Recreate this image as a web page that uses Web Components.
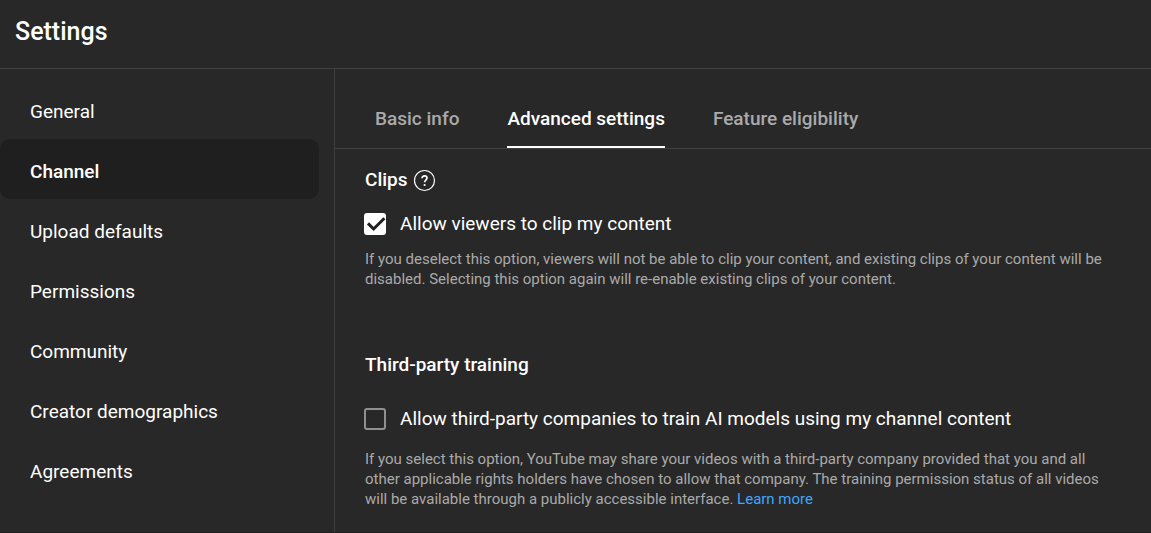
<!DOCTYPE html>
<html lang="en">
<head>
<meta charset="utf-8">
<meta name="viewport" content="width=device-width, initial-scale=1">
<title>Settings</title>
<style>
    body {
        margin: 0;
        background: #282828;
        color: #fff;
        font-family: Roboto, "Liberation Sans", sans-serif;
        font-size: 19px;
        line-height: 24px;
        --line: #3f3f3f;
        --muted: #aaa;
    }
</style>
</head>
<body>
<settings-dialog heading="Settings">
    <settings-nav-item slot="nav">General</settings-nav-item>
    <settings-nav-item slot="nav" selected>Channel</settings-nav-item>
    <settings-nav-item slot="nav">Upload defaults</settings-nav-item>
    <settings-nav-item slot="nav">Permissions</settings-nav-item>
    <settings-nav-item slot="nav">Community</settings-nav-item>
    <settings-nav-item slot="nav">Creator demographics</settings-nav-item>
    <settings-nav-item slot="nav">Agreements</settings-nav-item>

    <settings-tab slot="tabs">Basic info</settings-tab>
    <settings-tab slot="tabs" selected>Advanced settings</settings-tab>
    <settings-tab slot="tabs">Feature eligibility</settings-tab>

    <settings-section heading="Clips">
        <help-button slot="help"></help-button>
        <settings-option checked>
            Allow viewers to clip my content
            <span slot="description">If you deselect this option, viewers will not be able to clip your content, and existing clips of your content will be disabled. Selecting this option again will re-enable existing clips of your content.</span>
        </settings-option>
    </settings-section>
    <settings-section heading="Third-party training" spaced>
        <settings-option spaced>
            Allow third-party companies to train AI models using my channel content
            <span slot="description">If you select this option, YouTube may share your videos with a third-party company provided that you and all other applicable rights holders have chosen to allow that company. The training permission status of all videos will be available through a publicly accessible interface.</span>
            <settings-link slot="link">Learn more</settings-link>
        </settings-option>
    </settings-section>
</settings-dialog>

<script>
class SettingsElement extends HTMLElement {
    constructor() {
        super()
        this.attachShadow({mode: 'open'})
    }
    connectedCallback() {
        this.shadowRoot.innerHTML = this.template()
    }
    get(attr) {
        return this.getAttribute(attr) || ''
    }
}

class SettingsDialog extends SettingsElement {
    template() {
        return `
        <style>
            :host {
                display: flex;
                flex-direction: column;
                box-sizing: border-box;
                min-height: 100vh;
                border-bottom: 1px solid #1f1f1f;
            }
            header {
                padding: 16px 15px 20px;
                border-bottom: 1px solid var(--line);
            }
            h1 {
                margin: 0;
                font-size: 25px;
                font-weight: 500;
                line-height: 32px;
            }
            .body {
                display: flex;
                flex: 1;
            }
            nav {
                flex: none;
                width: 319px;
                padding: 10px 15px 0 0;
                border-right: 1px solid var(--line);
            }
            main {
                flex: 1;
                min-width: 0;
            }
            .tabs {
                display: flex;
                gap: 48px;
                padding: 20px 40px 0;
                border-bottom: 1px solid var(--line);
            }
            .content {
                padding: 16px 28px 16px 30px;
            }
        </style>
        <header><h1>${this.get('heading')}</h1></header>
        <div class="body">
            <nav><slot name="nav"></slot></nav>
            <main>
                <div class="tabs" role="tablist"><slot name="tabs"></slot></div>
                <div class="content"><slot></slot></div>
            </main>
        </div>
        `
    }
}
customElements.define('settings-dialog', SettingsDialog)

class SettingsNavItem extends SettingsElement {
    template() {
        return `
        <style>
            :host {
                display: block;
            }
            a {
                display: block;
                padding: 21px 30px 15px;
                border-radius: 10px;
                color: inherit;
                text-decoration: none;
            }
            :host([selected]) a {
                background: #1f1f1f;
                font-weight: 500;
            }
        </style>
        <a href="#" ${this.hasAttribute('selected') ? 'aria-current="page"' : ''}><slot></slot></a>
        `
    }
}
customElements.define('settings-nav-item', SettingsNavItem)

class SettingsTab extends SettingsElement {
    template() {
        return `
        <style>
            :host {
                display: block;
            }
            button {
                padding: 18px 0 15px;
                border: 0;
                border-bottom: 2px solid transparent;
                background: none;
                color: var(--muted);
                font: inherit;
                font-weight: 500;
                cursor: pointer;
            }
            :host([selected]) button {
                border-color: #fff;
                color: #fff;
            }
        </style>
        <button type="button" role="tab" aria-selected="${this.hasAttribute('selected')}"><slot></slot></button>
        `
    }
}
customElements.define('settings-tab', SettingsTab)

class SettingsSection extends SettingsElement {
    template() {
        return `
        <style>
            :host {
                display: block;
            }
            :host([spaced]) {
                margin-top: 61px;
            }
            .heading {
                display: flex;
                align-items: center;
                gap: 5px;
            }
            h2 {
                margin: 0;
                font-size: 19px;
                font-weight: 500;
                line-height: 30px;
            }
        </style>
        <div class="heading"><h2>${this.get('heading')}</h2><slot name="help"></slot></div>
        <slot></slot>
        `
    }
}
customElements.define('settings-section', SettingsSection)

class HelpButton extends SettingsElement {
    template() {
        return `
        <style>
            :host {
                display: block;
            }
            button {
                display: block;
                padding: 0;
                border: 0;
                background: none;
                color: inherit;
                cursor: pointer;
            }
            svg {
                display: block;
            }
        </style>
        <button type="button" aria-label="Help">
            <svg width="23" height="23" viewBox="0 0 23 23" fill="none" stroke="currentColor">
                <circle cx="11.5" cy="11.5" r="10" stroke-width="1.2"/>
                <path d="M9 9.3c0-1.5 1.1-2.5 2.5-2.5s2.5 1 2.5 2.3c0 1.9-2.4 2.1-2.4 4.2" stroke-width="1.7"/>
                <circle cx="11.6" cy="16" r="1.1" fill="currentColor" stroke="none"/>
            </svg>
        </button>
        `
    }
}
customElements.define('help-button', HelpButton)

class SettingsOption extends SettingsElement {
    template() {
        return `
        <style>
            :host {
                display: block;
                margin-top: 17px;
            }
            :host([spaced]) {
                margin-top: 27px;
            }
            label {
                display: flex;
                align-items: center;
                gap: 14px;
                margin-left: -1px;
            }
            .box {
                display: grid;
                flex: none;
            }
            input, svg {
                grid-area: 1 / 1;
                width: 22px;
                height: 22px;
            }
            input {
                appearance: none;
                box-sizing: border-box;
                margin: 0;
                border: 2px solid #909090;
                border-radius: 3px;
            }
            input:checked {
                border-color: #fff;
                background: #fff;
            }
            svg {
                visibility: hidden;
                pointer-events: none;
            }
            input:checked + svg {
                visibility: visible;
            }
            p {
                margin: 13px 0 0;
                color: var(--muted);
                font-size: 15px;
                line-height: 20px;
            }
            :host([spaced]) p {
                margin-top: 18px;
            }
        </style>
        <label>
            <span class="box">
                <input type="checkbox" ${this.hasAttribute('checked') ? 'checked' : ''}>
                <svg viewBox="0 0 22 22" fill="none" stroke="#1f1f1f" stroke-width="3">
                    <path d="M4 10.4l5.6 5.6L20.4 5.2"/>
                </svg>
            </span>
            <span><slot></slot></span>
        </label>
        <p><slot name="description"></slot> <slot name="link"></slot></p>
        `
    }
}
customElements.define('settings-option', SettingsOption)

class SettingsLink extends SettingsElement {
    template() {
        return `
        <style>
            :host {
                display: inline-block;
            }
            a {
                color: #3ea6ff;
                text-decoration: none;
            }
        </style>
        <a href="#"><slot></slot></a>
        `
    }
}
customElements.define('settings-link', SettingsLink)
</script>
</body>
</html>
